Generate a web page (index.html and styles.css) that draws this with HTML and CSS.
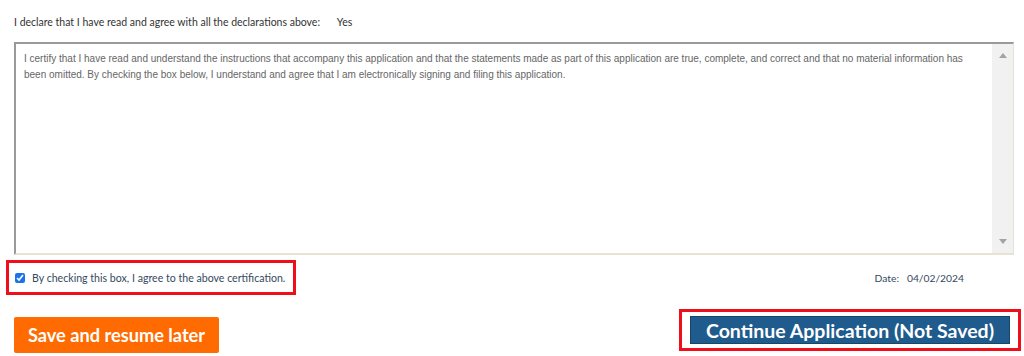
FILE: index.html
```html
<!DOCTYPE html>
<html lang="en">
<head>
  <meta charset="UTF-8">
  <title>Certification</title>
  <link rel="stylesheet" href="styles.css">
</head>
<body>
  <div class="page">
    <!-- Declaration -->
    <div class="declare">
      <span>I declare that I have read and agree with all the declarations above:</span>
      <span class="answer">Yes</span>
    </div>

    <!-- Certification text box -->
    <div class="cert-box">
      <div class="cert-text">I certify that I have read and understand the instructions that accompany this application and that the statements made as part of this application are true, complete, and correct and that no material information has been omitted. By checking the box below, I understand and agree that I am electronically signing and filing this application.</div>
      <div class="scrollbar">
        <span class="arrow up"></span>
        <span class="arrow down"></span>
      </div>
    </div>

    <div class="agree-row">
      <label class="agree highlight">
        <input type="checkbox" checked>
        <span>By checking this box, I agree to the above certification.</span>
      </label>
      <div class="date">Date:&nbsp;&nbsp; 04/02/2024</div>
    </div>

    <div class="actions">
      <button class="btn btn-save">Save and resume later</button>
      <div class="highlight btn-frame">
        <button class="btn btn-continue">Continue Application (Not Saved)</button>
      </div>
    </div>
  </div>
</body>
</html>
```

FILE: styles.css
```css
body {
  margin: 0;
  padding: 0;
  background: #fff;
  font-family: Lato, "Open Sans", sans-serif;
}

.page {
  width: 1024px;
  height: 356px;
  padding: 15px 0 0 14px;
  box-sizing: border-box;
}

.declare {
  font-size: 10.5px;
  color: #333;
  height: 14px;
  line-height: 14px;
}

.declare .answer {
  margin-left: 14px;
}

/* Certification box */
.cert-box {
  margin-top: 13px;
  width: 1000px;
  height: 213px;
  display: flex;
  box-sizing: border-box;
  border-top: 2px solid #9a9a9a;
  border-left: 2px solid #9a9a9a;
  border-right: 1px solid #e6e2d4;
  border-bottom: 2px solid #e6e2d4;
}

.cert-text {
  flex: 1;
  padding: 7px 10px 0 8px;
  font-family: "Liberation Sans", Arial, sans-serif;
  font-size: 10px;
  line-height: 16px;
  color: #666;
}

.scrollbar {
  width: 21px;
  background: #f1f1f1;
  display: flex;
  flex-direction: column;
  justify-content: space-between;
  align-items: center;
  padding: 9px 0 9px;
}

.arrow {
  width: 0;
  height: 0;
  border-left: 4px solid transparent;
  border-right: 4px solid transparent;
}

.arrow.up {
  border-bottom: 5px solid #a3a3a3;
}

.arrow.down {
  border-top: 5px solid #a3a3a3;
}

/* Agree row */
.agree-row {
  display: flex;
  justify-content: space-between;
  align-items: center;
  margin: 5px 0 0 -8px;
  width: 958px;
}

.highlight {
  border: 3px solid #ee0f1b;
}

.agree {
  width: 284px;
  height: 29px;
  display: flex;
  align-items: center;
  font-size: 10.6px;
  color: #34495e;
}

.agree input {
  width: 10px;
  height: 10px;
  margin: 0 7px 0 6px;
  accent-color: #1a73e8;
}

.date {
  font-size: 10.3px;
  color: #34495e;
}

/* Buttons */
.actions {
  display: flex;
  justify-content: space-between;
  align-items: flex-start;
  margin-top: 14px;
  width: 1007px;
}

.btn {
  border: none;
  color: #fff;
  font-family: Lato, "Open Sans", sans-serif;
  font-weight: bold;
  cursor: pointer;
  padding: 0;
}

.btn-save {
  margin-top: 8px;
  width: 205px;
  height: 36px;
  background: #ff6b00;
  font-size: 18.2px;
  border-radius: 2px;
}

.btn-frame {
  padding: 4px 8px 4px 8px;
}

.btn-continue {
  width: 320px;
  height: 28px;
  background: #1f5b8c;
  font-size: 19.5px;
  border: 1px solid #16466d;
}
```
